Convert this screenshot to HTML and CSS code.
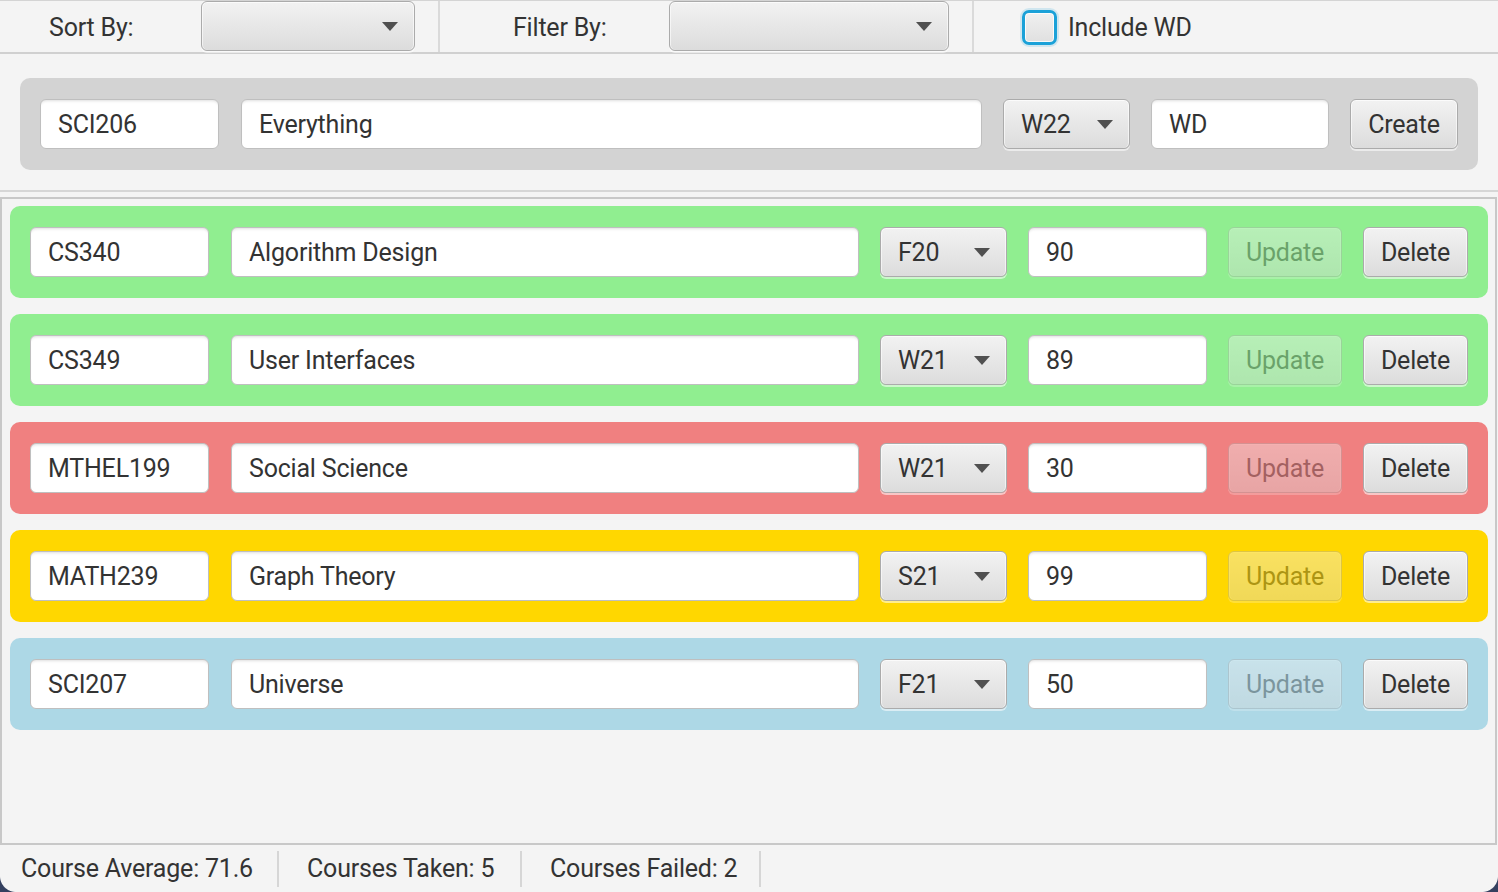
FILE: index.html
```html
<!DOCTYPE html>
<html lang="en">
<head>
<meta charset="utf-8">
<title>Courses</title>
<link rel="stylesheet" href="styles.css">
</head>
<body>
<div class="window">
  <header class="toolbar">
    <span class="tb-label sort-label">Sort By:</span>
    <div class="combo tb-combo sort-combo"><span class="combo-text"></span><i class="arrow"></i></div>
    <div class="vsep"></div>
    <span class="tb-label filter-label">Filter By:</span>
    <div class="combo tb-combo filter-combo"><span class="combo-text"></span><i class="arrow"></i></div>
    <div class="vsep"></div>
    <label class="check"><span class="box"></span><span class="check-text">Include WD</span></label>
  </header>

  <section class="create-area">
    <div class="row create-row">
      <div class="field code wide-code">SCI206</div>
      <div class="field title create-title">Everything</div>
      <div class="combo term"><span class="combo-text">W22</span><i class="arrow"></i></div>
      <div class="field grade create-grade">WD</div>
      <button class="btn create-btn">Create</button>
    </div>
  </section>

  <div class="hline"></div>

  <main class="scroll">
    <div class="list">
      <div class="row course green">
        <div class="field code">CS340</div>
        <div class="field title">Algorithm Design</div>
        <div class="combo term"><span class="combo-text">F20</span><i class="arrow"></i></div>
        <div class="field grade">90</div>
        <button class="btn update" disabled>Update</button>
        <button class="btn delete">Delete</button>
      </div>
      <div class="row course green">
        <div class="field code">CS349</div>
        <div class="field title">User Interfaces</div>
        <div class="combo term"><span class="combo-text">W21</span><i class="arrow"></i></div>
        <div class="field grade">89</div>
        <button class="btn update" disabled>Update</button>
        <button class="btn delete">Delete</button>
      </div>
      <div class="row course coral">
        <div class="field code">MTHEL199</div>
        <div class="field title">Social Science</div>
        <div class="combo term"><span class="combo-text">W21</span><i class="arrow"></i></div>
        <div class="field grade">30</div>
        <button class="btn update" disabled>Update</button>
        <button class="btn delete">Delete</button>
      </div>
      <div class="row course gold">
        <div class="field code">MATH239</div>
        <div class="field title">Graph Theory</div>
        <div class="combo term"><span class="combo-text">S21</span><i class="arrow"></i></div>
        <div class="field grade">99</div>
        <button class="btn update" disabled>Update</button>
        <button class="btn delete">Delete</button>
      </div>
      <div class="row course blue">
        <div class="field code">SCI207</div>
        <div class="field title">Universe</div>
        <div class="combo term"><span class="combo-text">F21</span><i class="arrow"></i></div>
        <div class="field grade">50</div>
        <button class="btn update" disabled>Update</button>
        <button class="btn delete">Delete</button>
      </div>
    </div>
  </main>

  <footer class="status">
    <span class="stat stat-avg">Course Average: 71.6</span>
    <span class="ssep"></span>
    <span class="stat stat-taken">Courses Taken: 5</span>
    <span class="ssep"></span>
    <span class="stat stat-failed">Courses Failed: 2</span>
    <span class="ssep"></span>
  </footer>

  <div class="corner corner-left"></div>
  <div class="corner corner-right"></div>
</div>
</body>
</html>
```

FILE: styles.css
```css
* { box-sizing: border-box; }

html, body {
  margin: 0;
  padding: 0;
}

body {
  width: 1498px;
  height: 892px;
  overflow: hidden;
  background: #f4f4f4;
  font-family: Roboto, "Liberation Sans", sans-serif;
  font-size: 25px;
  letter-spacing: -0.2px;
  color: #333333;
}

.window {
  position: relative;
  width: 1498px;
  height: 892px;
  display: flex;
  flex-direction: column;
  background: #f4f4f4;
}

/* ---------- toolbar ---------- */
.toolbar {
  height: 54px;
  flex: 0 0 54px;
  display: flex;
  align-items: center;
  border-top: 1px solid #d4d4d4;
  border-bottom: 2px solid #d0d0d0;
}

.tb-label { white-space: nowrap; padding-top: 2px; }
.sort-label { margin-left: 49px; width: 152px; }
.filter-label { margin-left: 73px; width: 156px; }

.tb-combo { height: 50px; align-self: flex-start; margin-top: 0; }
.sort-combo { width: 214px; padding: 0 16px 0 18px; }
.filter-combo { width: 280px; padding: 0 16px 0 18px; }

.vsep {
  align-self: stretch;
  width: 2px;
  background: #dadada;
  margin-left: 23px;
}

.check {
  display: flex;
  align-items: center;
  margin-left: 48px;
  padding-top: 2px;
}

.box {
  width: 35px;
  height: 35px;
  border-radius: 7px;
  border: 3px solid #1ba1d8;
  background: linear-gradient(#f0f0f0, #e0e0e0);
  box-shadow: 0 0 0 2px rgba(80, 180, 225, 0.22), inset 0 0 0 1px rgba(255, 255, 255, 0.8);
}

.check-text { margin-left: 11px; }

/* ---------- create area ---------- */
.create-area {
  flex: 0 0 136px;
  padding: 24px 20px 20px 20px;
}

.hline {
  flex: 0 0 2px;
  background: #d6d6d6;
  margin-bottom: 5px;
}

/* ---------- rows ---------- */
.row {
  height: 92px;
  border-radius: 10px;
  display: flex;
  align-items: center;
  padding: 0 20px;
  gap: 21px;
}

.create-row { background: #d3d3d3; }
.green { background: #90ee90; }
.coral { background: #f08080; }
.gold { background: #ffd700; }
.blue { background: #add8e6; }

.field {
  height: 50px;
  display: flex;
  align-items: center;
  padding: 0 17px;
  background: #ffffff;
  border: 1px solid #bfbfbf;
  border-radius: 6px;
  box-shadow: inset 0 3px 3px -2px rgba(0, 0, 0, 0.13);
  white-space: nowrap;
}

.code { width: 179px; }
.title { width: 628px; margin-left: 1px; }
.create-title { width: 741px; }
.grade { width: 179px; }
.create-grade { width: 178px; }

.combo {
  height: 50px;
  display: flex;
  align-items: center;
  justify-content: space-between;
  border: 1px solid #ababab;
  border-radius: 6px;
  background: linear-gradient(#f2f2f2 0%, #e6e6e6 55%, #dcdcdc 100%);
  box-shadow: inset 0 1px 0 #fbfbfb, inset 1px 0 0 rgba(255,255,255,0.6), inset -1px 0 0 rgba(255,255,255,0.6), 0 2px 0 rgba(255, 255, 255, 0.55);
}

.term { width: 127px; padding: 0 16px 0 17px; }

.arrow {
  width: 0;
  height: 0;
  border-left: 8px solid transparent;
  border-right: 8px solid transparent;
  border-top: 9px solid #505050;
}

.btn {
  height: 50px;
  font-family: inherit;
  font-size: 25px;
  letter-spacing: -0.2px;
  color: #333333;
  padding: 0;
  border: 1px solid #ababab;
  border-radius: 6px;
  background: linear-gradient(#f2f2f2 0%, #e6e6e6 55%, #dcdcdc 100%);
  box-shadow: inset 0 1px 0 #fbfbfb, inset 1px 0 0 rgba(255,255,255,0.6), inset -1px 0 0 rgba(255,255,255,0.6), 0 2px 0 rgba(255, 255, 255, 0.55);
}

.create-btn { width: 108px; }
.update { width: 114px; opacity: 0.4; }
.delete { width: 105px; }

/* ---------- scroll pane ---------- */
.scroll {
  flex: 0 0 648px;
  border: 2px solid #c8c8c8;
  margin-right: 1px;
  background: #f4f4f4;
  overflow: hidden;
}

.list {
  display: flex;
  flex-direction: column;
  gap: 16px;
  padding: 7px 7px 0 8px;
}

/* ---------- status ---------- */
.status {
  flex: 1 1 auto;
  display: flex;
  align-items: center;
}

.stat { white-space: nowrap; }
.stat-avg { width: 277px; padding-left: 21px; }
.stat-taken { width: 241px; padding-left: 28px; }
.stat-failed { width: 237px; padding-left: 28px; }

.ssep {
  width: 2px;
  height: 36px;
  background: #d6d6d6;
}

/* ---------- window corners ---------- */
.corner {
  position: absolute;
  bottom: 0;
  width: 16px;
  height: 16px;
}
.corner-left {
  left: 0;
  background: radial-gradient(circle at 100% 0, transparent 15.5px, #34405f 16.5px);
}
.corner-right {
  right: 0;
  background: radial-gradient(circle at 0 0, transparent 15.5px, #34405f 16.5px);
}
```
